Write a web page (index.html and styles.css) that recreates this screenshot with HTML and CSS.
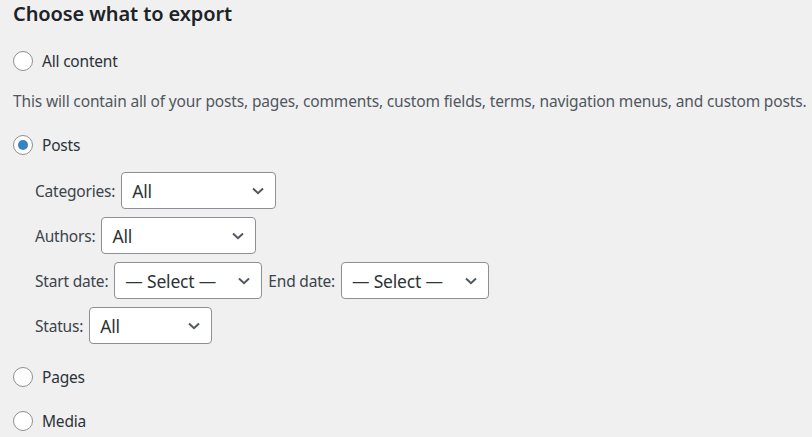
FILE: index.html
```html
<!DOCTYPE html>
<html lang="en">
<head>
<meta charset="utf-8">
<title>Export</title>
<link rel="stylesheet" href="styles.css">
</head>
<body>
<div class="wrap">
  <h2 class="title">Choose what to export</h2>
  <div class="option"><span class="radio"></span><span class="opt-label">All content</span></div>
  <p class="description">This will contain all of your posts, pages, comments, custom fields, terms, navigation menus, and custom posts.</p>
  <div class="option posts-opt"><span class="radio checked"></span><span class="opt-label">Posts</span></div>
  <div class="filters">
    <div class="frow">
      <span class="flabel">Categories:</span>
      <div class="select w-cat"><span class="sval">All</span><svg class="chev" width="12" height="8" viewBox="0 0 12 8"><path d="M1 1.5 L6 6.2 L11 1.5" fill="none" stroke="#50575e" stroke-width="2"/></svg></div>
    </div>
    <div class="frow">
      <span class="flabel">Authors:</span>
      <div class="select w-cat"><span class="sval">All</span><svg class="chev" width="12" height="8" viewBox="0 0 12 8"><path d="M1 1.5 L6 6.2 L11 1.5" fill="none" stroke="#50575e" stroke-width="2"/></svg></div>
    </div>
    <div class="frow">
      <span class="flabel">Start date:</span>
      <div class="select w-date"><span class="sval">— Select —</span><svg class="chev" width="12" height="8" viewBox="0 0 12 8"><path d="M1 1.5 L6 6.2 L11 1.5" fill="none" stroke="#50575e" stroke-width="2"/></svg></div>
      <span class="flabel">End date:</span>
      <div class="select w-date"><span class="sval">— Select —</span><svg class="chev" width="12" height="8" viewBox="0 0 12 8"><path d="M1 1.5 L6 6.2 L11 1.5" fill="none" stroke="#50575e" stroke-width="2"/></svg></div>
    </div>
    <div class="frow">
      <span class="flabel">Status:</span>
      <div class="select w-status"><span class="sval">All</span><svg class="chev" width="12" height="8" viewBox="0 0 12 8"><path d="M1 1.5 L6 6.2 L11 1.5" fill="none" stroke="#50575e" stroke-width="2"/></svg></div>
    </div>
  </div>
  <div class="option pages-opt"><span class="radio"></span><span class="opt-label">Pages</span></div>
  <div class="option media-opt"><span class="radio"></span><span class="opt-label">Media</span></div>
</div>
</body>
</html>
```
FILE: styles.css
```css
html, body {
  margin: 0;
  padding: 0;
  background: #f0f0f1;
}
body {
  font-family: "Noto Sans", "Open Sans", sans-serif;
  font-size: 15.5px;
  letter-spacing: -0.2px;
  color: #3c434a;
}
.wrap {
  padding: 0 13px;
}
.title {
  margin: 0;
  font-size: 20px;
  letter-spacing: -0.1px;
  line-height: 28px;
  font-weight: 600;
  color: #1d2327;
}
.option {
  display: flex;
  align-items: center;
  height: 20px;
  margin-top: 23px;
}
.radio {
  box-sizing: border-box;
  width: 20px;
  height: 20px;
  border: 1px solid #8c8f94;
  border-radius: 50%;
  background: #fff;
  display: flex;
  align-items: center;
  justify-content: center;
  flex: none;
}
.radio.checked::before {
  content: "";
  width: 10px;
  height: 10px;
  border-radius: 50%;
  background: #3582c4;
}
.opt-label {
  margin-left: 9px;
  line-height: 20px;
  color: #2c3338;
}
.description {
  margin: 19px 0 0;
  line-height: 22px;
  letter-spacing: -0.15px;
  white-space: nowrap;
  color: #50575e;
}
.posts-opt {
  margin-top: 23px;
}
.filters {
  margin-top: 17px;
  padding-left: 22px;
  display: flex;
  flex-direction: column;
  gap: 8px;
}
.frow {
  display: flex;
  align-items: center;
  gap: 6px;
  height: 37px;
}
.flabel {
  color: #3c434a;
}
.select {
  position: relative;
  box-sizing: border-box;
  height: 37px;
  border: 1px solid #8c8f94;
  border-radius: 4px;
  background: #fff;
  display: flex;
  align-items: center;
  justify-content: space-between;
  padding: 0 11px 0 10px;
  font-size: 17.5px;
  letter-spacing: -0.2px;
  color: #2c3338;
}
.w-cat { width: 155px; }
.w-date { width: 148px; }
.w-status { width: 123px; }
.chev {
  flex: none;
}
.pages-opt {
  margin-top: 23px;
}
.media-opt {
  margin-top: 24px;
}
```
